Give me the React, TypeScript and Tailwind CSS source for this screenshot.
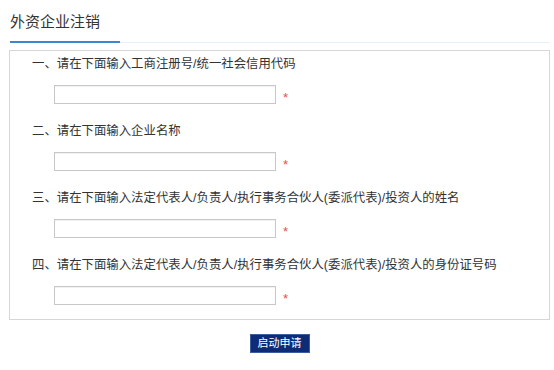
const fields = [
  "一、请在下面输入工商注册号/统一社会信用代码",
  "二、请在下面输入企业名称",
  "三、请在下面输入法定代表人/负责人/执行事务合伙人(委派代表)/投资人的姓名",
  "四、请在下面输入法定代表人/负责人/执行事务合伙人(委派代表)/投资人的身份证号码",
]

export default function App() {
  return (
    <div className="h-[370px] w-[554px] bg-white font-['Liberation_Sans','Noto_Sans_CJK_SC',sans-serif] text-[#333]">
      {/* HEADER */}
      <div className="pl-[10px] pt-[12px] text-[15px] leading-[20px]">外资企业注销</div>
      <div className="mt-[9px] flex items-end pl-[10px] pr-[4px]">
        <div className="h-[2px] w-[110px] bg-[#3d87cf]"></div>
        <div className="h-px flex-1 bg-[#e6eef6]"></div>
      </div>

      {/* FORM */}
      <div className="ml-[9px] mr-[4px] mt-[7px] border border-[#d6d6d6] pb-[14px] pt-[4px]">
        {fields.map((label, i) => (
          <div key={i} className={i === 0 ? "" : "mt-[18px]"}>
            <div className="whitespace-nowrap pl-[22px] text-[12.4px] leading-[18px]">{label}</div>
            <div className="mt-[12px] flex items-center pl-[44px]">
              <input
                type="text"
                className="h-[19px] w-[222px] border border-[#c8c8c8] bg-white shadow-[inset_0_1px_1px_rgba(0,0,0,0.06)] outline-none"
              />
              <span className="ml-[7px] mt-[6px] text-[13px] leading-none text-[#e8513f]">*</span>
            </div>
          </div>
        ))}
      </div>

      <div className="ml-[9px] mr-[4px] mt-[14px] flex justify-center">
        <button className="h-[19px] w-[60px] border border-[#3b5c9e] bg-[#0e2b78] text-[11px] leading-none text-white">
          启动申请
        </button>
      </div>
    </div>
  )
}
